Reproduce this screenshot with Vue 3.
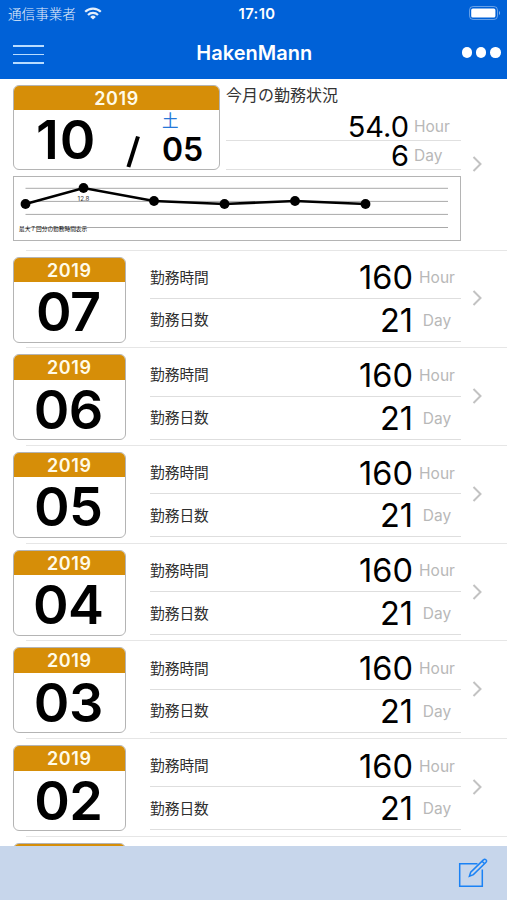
<template>
	<div class="screen">
		<header class="top">
			<div class="status-bar">
				<div class="carrier">
					<span>通信事業者</span>
					<svg class="wifi" viewBox="0 0 18 13">
						<path d="M1.2 4.8 A11 11 0 0 1 16.8 4.8" />
						<path d="M4 7.9 A7 7 0 0 1 14 7.9" />
						<path class="dot" d="M9 12.6 L6.2 9.9 A4 4 0 0 1 11.8 9.9 Z" />
					</svg>
				</div>
				<div class="clock">17:10</div>
				<svg class="battery" viewBox="0 0 32 14">
					<rect class="shell" x="0.5" y="0.5" width="28" height="13" rx="3.6" />
					<rect class="charge" x="2.2" y="2.4" width="24.2" height="9.2" rx="1.6" />
					<path class="tip" d="M30 5 A2.4 2.4 0 0 1 30 9 Z" />
				</svg>
			</div>
			<nav class="nav-bar">
				<button class="menu" aria-label="Menu"><i></i><i></i><i></i></button>
				<h1>HakenMann</h1>
				<button class="more" aria-label="More"><i></i><i></i><i></i></button>
			</nav>
		</header>

		<main class="list">
			<section class="current">
				<div class="current-main">
					<div class="current-head">
						<div class="card today">
							<div class="year">2019</div>
							<div class="date">
								<span class="month">10</span>
								<svg class="slash" viewBox="0 0 16 34">
									<path d="M13 1.5 L3.4 32" />
								</svg>
								<div class="day">
									<span class="weekday">土</span>
									<span class="day-number">05</span>
								</div>
							</div>
						</div>
						<div class="summary">
							<div class="summary-title">今月の勤務状況</div>
							<div class="summary-line">
								<span class="amount">54.0</span><span class="unit">Hour</span>
							</div>
							<div class="summary-line">
								<span class="amount">6</span><span class="unit">Day</span>
							</div>
						</div>
					</div>
					<svg class="chart" viewBox="0 0 448 65">
						<rect class="frame" x="0.5" y="0.5" width="447" height="64" />
						<line v-for="y in gridLines" :key="y" class="grid" x1="12.5" x2="435" :y1="y" :y2="y" />
						<polyline class="trend" :points="trend" />
						<circle v-for="p in points" :key="p.x" :cx="p.x" :cy="p.y" r="4.9" />
						<text class="peak" x="70.5" y="24.6">12.8</text>
						<text class="note" x="6" y="55.2">最大７回分の勤務時間表示</text>
					</svg>
				</div>
				<svg class="chevron" viewBox="0 0 10 16"><path d="M1.5 1 L8.5 8 L1.5 15" /></svg>
			</section>

			<section v-for="row in rows" :key="row.month" class="row">
				<div class="card">
					<div class="year">{{ row.year }}</div>
					<div class="month-number">{{ row.month }}</div>
				</div>
				<div class="fields">
					<div class="field">
						<span class="label">勤務時間</span>
						<span class="amount">{{ row.hours }}</span>
						<span class="unit">Hour</span>
					</div>
					<div class="field">
						<span class="label">勤務日数</span>
						<span class="amount">{{ row.days }}</span>
						<span class="unit">Day</span>
					</div>
				</div>
				<svg class="chevron" viewBox="0 0 10 16"><path d="M1.5 1 L8.5 8 L1.5 15" /></svg>
			</section>

			<!-- next card, mostly under the toolbar -->
			<section class="row">
				<div class="card"><div class="year"></div></div>
			</section>
		</main>

		<footer class="toolbar">
			<button class="compose" aria-label="Compose">
				<svg viewBox="0 0 30 30">
					<path d="M19.5 5.8 H1.7 V28.3 H24.3 V11.5" />
					<path d="M11.4 18.2 L12.7 14.2 L25.4 1.9 A1.6 1.6 0 0 1 28 4.3 L15.4 16.6 Z" />
					<path d="M24 3.3 L26.7 5.8" />
				</svg>
			</button>
		</footer>
	</div>
</template>

<script setup>
import { computed } from 'vue';

const gridLines = [12.3, 25.4, 38.4, 51.5];

const points = [
	{ x: 12.5, y: 28 },
	{ x: 70.5, y: 12 },
	{ x: 141, y: 25 },
	{ x: 211.5, y: 28 },
	{ x: 282, y: 25 },
	{ x: 352.5, y: 28 },
];

const trend = computed(() => points.map((p) => `${p.x},${p.y}`).join(' '));

const rows = ['07', '06', '05', '04', '03', '02'].map((month) => ({
	year: 2019,
	month,
	hours: 160,
	days: 21,
}));
</script>

<style>
body {
	margin: 0;
}
</style>

<style scoped>
.screen {
	display: flex;
	flex-direction: column;
	width: 507px;
	height: 900px;
	overflow: hidden;
	background: #fff;
	color: #000;
	font-family: Inter, 'Noto Sans CJK JP', sans-serif;
}

button {
	padding: 0;
	border: 0;
	background: none;
}

.top {
	flex: none;
	height: 79px;
	background: #0061d7;
	color: #fff;
}

.status-bar {
	display: grid;
	grid-template-columns: 1fr auto 1fr;
	align-items: center;
	height: 27px;
	padding: 0 6px 0 8px;
}

.carrier {
	display: flex;
	align-items: center;
	gap: 8px;
	padding-top: 1px;
	font-size: 13.6px;
	font-weight: 300;
	line-height: 26px;
	opacity: 0.9;
}

.wifi {
	width: 18px;
	height: 13px;
	margin-top: -2px;
	fill: none;
	stroke: #fff;
	stroke-width: 2.2;
}

.wifi .dot {
	fill: #fff;
	stroke: none;
}

.clock {
	padding-left: 5px;
	font-size: 14.8px;
	font-weight: 600;
	letter-spacing: 0.4px;
}

.battery {
	justify-self: end;
	width: 32px;
	height: 14px;
	margin-top: -1px;
	fill: #fff;
}

.battery .shell {
	fill: none;
	stroke: #fff;
	opacity: 0.4;
}

.battery .tip {
	opacity: 0.5;
}

.nav-bar {
	display: grid;
	grid-template-columns: 1fr auto 1fr;
	align-items: center;
	height: 51px;
	padding: 0 6.5px 0 13px;
}

.nav-bar h1 {
	margin: 0 5px 0 0;
	font-size: 20px;
	font-weight: 600;
}

.menu {
	display: flex;
	flex-direction: column;
	gap: 7px;
	width: 31px;
	padding-top: 4px;
}

.menu i {
	height: 1.5px;
	background: #b9dcff;
}

.more {
	display: flex;
	gap: 4px;
	justify-self: end;
}

.more i {
	width: 10.3px;
	height: 10.3px;
	border-radius: 50%;
	background: #fff;
}

.list {
	flex: 1;
	min-height: 0;
	overflow: hidden;
}

.current,
.row {
	display: flex;
	box-sizing: border-box;
	padding-left: 13px;
	background: linear-gradient(#e6e6e6, #e6e6e6) 26px 100% / 100% 1px no-repeat;
}

.current {
	align-items: center;
	height: 171.6px;
}

.current-main {
	display: flex;
	flex-direction: column;
	gap: 6px;
	width: 448px;
	margin-top: -4px;
}

.current-head {
	display: flex;
	gap: 6px;
	height: 85px;
}

.card {
	box-sizing: border-box;
	flex: none;
	width: 112.5px;
	height: 86px;
	border: 1.5px solid #b4b4b4;
	border-radius: 6px;
	background: #fff;
}

.card.today {
	width: 207px;
	height: 85px;
}

.year {
	height: 24.5px;
	border-radius: 5px 5px 0 0;
	background: #d68e08;
	color: #fffbe8;
	font-size: 18px;
	font-weight: 600;
	line-height: 25.5px;
	letter-spacing: 0.6px;
	text-align: center;
}

.month-number {
	padding-right: 2px;
	font-size: 54px;
	font-weight: 600;
	line-height: 60px;
	letter-spacing: -0.6px;
	text-align: center;
}

.date {
	display: flex;
	height: 58px;
	padding-left: 22px;
}

.month {
	width: 66px;
	font-size: 54px;
	font-weight: 600;
	line-height: 60px;
	letter-spacing: 0.8px;
}

.slash {
	width: 16px;
	height: 34px;
	margin: 25px 0 0 23px;
	fill: none;
	stroke: #000;
	stroke-width: 4;
}

.day {
	display: flex;
	flex-direction: column;
	width: 46px;
	margin-left: 21px;
}

.weekday {
	color: #2577d8;
	font-size: 16.5px;
	line-height: 23px;
}

.day-number {
	font-size: 32px;
	font-weight: 600;
	line-height: 33px;
}

.summary {
	flex: 1;
}

.summary-title {
	height: 27px;
	color: #333;
	font-size: 16px;
	line-height: 21px;
}

.summary-line {
	display: flex;
	align-items: center;
	justify-content: flex-end;
	box-sizing: border-box;
	height: 29px;
	padding-top: 1px;
	border-bottom: 1px solid #e0e0e0;
}

.amount {
	font-size: 32.5px;
	line-height: 37px;
}

.summary .amount {
	font-size: 29px;
	line-height: 27px;
}

.unit {
	color: #b8b8b8;
	font-size: 15.5px;
	font-weight: 400;
	text-align: center;
}

.summary .unit {
	width: 47px;
	margin-left: 5px;
	text-align: left;
}

.chart {
	width: 448px;
	height: 65px;
}

.frame {
	fill: #fff;
	stroke: #b4b4b4;
}

.grid {
	stroke: #a9a9a9;
}

.trend {
	fill: none;
	stroke: #000;
	stroke-width: 2.6;
}

.peak {
	font-size: 6.2px;
	fill: #333;
	text-anchor: middle;
}

.note {
	font-size: 5.7px;
	fill: #000;
}

.chevron {
	align-self: center;
	width: 10px;
	height: 16px;
	margin-left: 11px;
	fill: none;
	stroke: #c2c2c2;
	stroke-width: 2;
}

.current .chevron {
	margin-top: -2px;
}

.row {
	height: 97.7px;
	padding-top: 6px;
}

.row .chevron {
	margin-top: -8px;
}

.fields {
	width: 311px;
	margin-left: 24.5px;
}

.field {
	display: flex;
	align-items: center;
	box-sizing: border-box;
	height: 43px;
	padding-top: 1px;
	border-bottom: 1px solid #dedede;
}

.field:first-child {
	height: 42.4px;
}

.label {
	flex: 1;
	color: #2e2e2e;
	font-size: 14.7px;
	line-height: 20px;
}

.field .unit {
	width: 48px;
}

.toolbar {
	display: flex;
	flex: none;
	align-items: center;
	justify-content: flex-end;
	height: 54px;
	padding-right: 19px;
	box-sizing: border-box;
	background: #c7d6eb;
}

.compose {
	width: 30px;
	height: 30px;
}

.compose svg {
	display: block;
	fill: none;
	stroke: #1a82f5;
	stroke-width: 1.5;
}
</style>
